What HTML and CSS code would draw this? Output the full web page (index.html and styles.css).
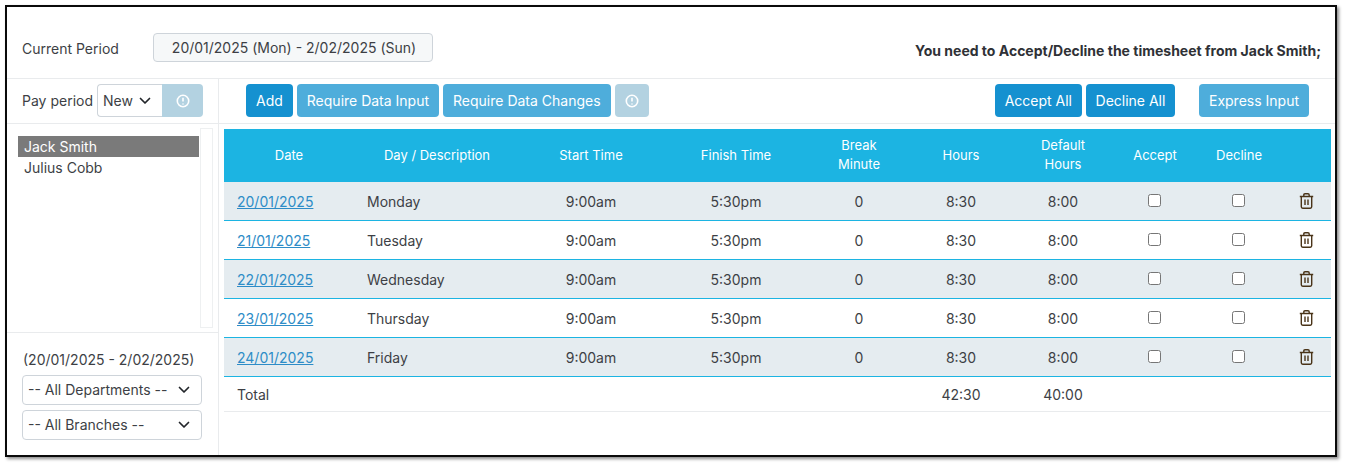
FILE: index.html
```html
<!DOCTYPE html>
<html lang="en">
<head>
<meta charset="utf-8">
<title>Timesheet</title>
<link rel="stylesheet" href="styles.css">
</head>
<body>
<main class="frame">
  <header class="top">
    <span class="label">Current Period</span>
    <div class="period">20/01/2025 (Mon) - 2/02/2025 (Sun)</div>
    <strong class="notice">You need to Accept/Decline the timesheet from Jack Smith;</strong>
  </header>
  <div class="body">
    <aside class="side">
      <div class="payrow">
        <span class="paylabel">Pay period</span>
        <div class="select new">New<svg class="chev" viewBox="0 0 12 8"><path d="M1.5 1.5 6 6l4.500-4.500"/></svg></div>
        <button class="btn pale joined"><svg class="info" viewBox="0 0 14 14"><circle cx="7" cy="7" r="5.7"/><path d="M7 3.800v3.800M7 9.400v1"/></svg></button>
      </div>
      <div class="listwrap">
        <ul class="list">
          <li class="sel">Jack Smith</li>
          <li>Julius Cobb</li>
        </ul>
        <div class="track"></div>
      </div>
      <div class="filters">
        <div class="range">(20/01/2025 - 2/02/2025)</div>
        <div class="select wide">-- All Departments --<svg class="chev" viewBox="0 0 12 8"><path d="M1.5 1.5 6 6l4.500-4.500"/></svg></div>
        <div class="select wide">-- All Branches --<svg class="chev" viewBox="0 0 12 8"><path d="M1.5 1.5 6 6l4.500-4.500"/></svg></div>
      </div>
    </aside>
    <section class="content">
      <div class="toolbar">
        <button class="btn dark">Add</button>
        <button class="btn mid">Require Data Input</button>
        <button class="btn mid">Require Data Changes</button>
        <button class="btn pale square"><svg class="info" viewBox="0 0 14 14"><circle cx="7" cy="7" r="5.7"/><path d="M7 3.800v3.800M7 9.400v1"/></svg></button>
        <span class="spacer"></span>
        <button class="btn dark">Accept All</button>
        <button class="btn dark decline">Decline All</button>
        <button class="btn mid express">Express Input</button>
      </div>
      <div class="tablewrap">
        <table class="grid">
          <colgroup>
            <col class="c1"><col class="c2"><col class="c3"><col class="c4"><col class="c5"><col class="c6"><col class="c7"><col class="c8"><col class="c9"><col class="c10">
          </colgroup>
          <thead>
            <tr>
              <th>Date</th><th class="day">Day / Description</th><th>Start Time</th><th>Finish Time</th><th class="two">Break<br>Minute</th><th>Hours</th><th class="two">Default<br>Hours</th><th>Accept</th><th>Decline</th><th></th>
            </tr>
          </thead>
          <tbody>
            <tr class="odd"><td class="left"><a href="#">20/01/2025</a></td><td class="left">Monday</td><td>9:00am</td><td>5:30pm</td><td>0</td><td>8:30</td><td>8:00</td><td><span class="check"></span></td><td><span class="check"></span></td><td><svg class="trash" viewBox="0 0 15 16"><path d="M.8 3.500h13.400M4.800 3.500V2q0-1.200 1.200-1.200h3q1.200 0 1.200 1.200v1.500M2.300 3.500v10.300q0 1.400 1.400 1.400h7.600q1.400 0 1.400-1.400V3.500M6 6.500v5.500M9 6.500v5.500"/></svg></td></tr>
            <tr><td class="left"><a href="#">21/01/2025</a></td><td class="left">Tuesday</td><td>9:00am</td><td>5:30pm</td><td>0</td><td>8:30</td><td>8:00</td><td><span class="check"></span></td><td><span class="check"></span></td><td><svg class="trash" viewBox="0 0 15 16"><path d="M.8 3.500h13.400M4.800 3.500V2q0-1.200 1.200-1.200h3q1.200 0 1.200 1.200v1.500M2.300 3.500v10.300q0 1.400 1.400 1.400h7.600q1.400 0 1.400-1.400V3.500M6 6.500v5.500M9 6.500v5.500"/></svg></td></tr>
            <tr class="odd"><td class="left"><a href="#">22/01/2025</a></td><td class="left">Wednesday</td><td>9:00am</td><td>5:30pm</td><td>0</td><td>8:30</td><td>8:00</td><td><span class="check"></span></td><td><span class="check"></span></td><td><svg class="trash" viewBox="0 0 15 16"><path d="M.8 3.500h13.400M4.800 3.500V2q0-1.200 1.200-1.200h3q1.200 0 1.200 1.200v1.500M2.300 3.500v10.300q0 1.400 1.400 1.400h7.600q1.400 0 1.400-1.400V3.500M6 6.500v5.500M9 6.500v5.500"/></svg></td></tr>
            <tr><td class="left"><a href="#">23/01/2025</a></td><td class="left">Thursday</td><td>9:00am</td><td>5:30pm</td><td>0</td><td>8:30</td><td>8:00</td><td><span class="check"></span></td><td><span class="check"></span></td><td><svg class="trash" viewBox="0 0 15 16"><path d="M.8 3.500h13.400M4.800 3.500V2q0-1.200 1.200-1.200h3q1.200 0 1.200 1.200v1.500M2.300 3.500v10.300q0 1.400 1.400 1.400h7.600q1.400 0 1.400-1.400V3.500M6 6.500v5.500M9 6.500v5.500"/></svg></td></tr>
            <tr class="odd"><td class="left"><a href="#">24/01/2025</a></td><td class="left">Friday</td><td>9:00am</td><td>5:30pm</td><td>0</td><td>8:30</td><td>8:00</td><td><span class="check"></span></td><td><span class="check"></span></td><td><svg class="trash" viewBox="0 0 15 16"><path d="M.8 3.500h13.400M4.800 3.500V2q0-1.200 1.200-1.200h3q1.200 0 1.200 1.200v1.500M2.300 3.500v10.300q0 1.400 1.400 1.400h7.600q1.400 0 1.400-1.400V3.500M6 6.500v5.500M9 6.500v5.500"/></svg></td></tr>
          </tbody>
          <tfoot>
            <tr><td class="left">Total</td><td></td><td></td><td></td><td></td><td>42:30</td><td>40:00</td><td></td><td></td><td></td></tr>
          </tfoot>
        </table>
      </div>
    </section>
  </div>
</main>
</body>
</html>
```
FILE: styles.css
```css
* { box-sizing: border-box; }
html, body { margin: 0; height: 100%; background: #fff; }
body {
  padding: 5px 9px 0 5px;
  font-family: Inter, "Liberation Sans", sans-serif;
  font-size: 14px;
  color: #3d3f45;
  overflow: hidden;
}
.frame {
  width: 1332px;
  height: 452px;
  border: 2px solid #0a0a0a;
  background: #fff;
  box-shadow: 2px 2px 3px rgba(0, 0, 0, .45);
  display: flex;
  flex-direction: column;
}
.top {
  height: 72px;
  flex: none;
  display: flex;
  align-items: center;
  padding: 10px 14px 0 15px;
  border-bottom: 1px solid #e9ebed;
}
.label { width: 131px; margin-top: 2px; }
.period {
  width: 280px;
  height: 29px;
  border: 1px solid #ced4da;
  border-radius: 4px;
  background: #f6f8f9;
  text-align: center;
  line-height: 27px;
  padding-left: 2px;
}
.notice {
  margin-left: auto;
  margin-top: 6px;
  font-weight: 700;
  color: #2f3136;
}
.body { flex: 1; display: flex; min-height: 0; }
.side {
  width: 212px;
  flex: none;
  border-right: 1px solid #e9ebed;
  display: flex;
  flex-direction: column;
}
.payrow {
  height: 45px;
  flex: none;
  display: flex;
  align-items: center;
  padding-left: 15px;
  padding-bottom: 1px;
  border-bottom: 1px solid #e9ebed;
}
.paylabel { width: 75px; }
.select {
  display: flex;
  align-items: center;
  justify-content: space-between;
  background: #fff;
  border: 1px solid #ced4da;
  border-radius: 4px;
  padding: 0 11px 0 5px;
}
.new {
  width: 65px;
  height: 33px;
  border-radius: 4px 0 0 4px;
  border-right: 0;
}
.chev {
  width: 12px;
  height: 8px;
  fill: none;
  stroke: #22252a;
  stroke-width: 1.7;
  stroke-linecap: round;
  stroke-linejoin: round;
}
.btn {
  height: 33px;
  border: 0;
  border-radius: 4px;
  padding: 0 10px;
  font: inherit;
  color: #fff;
  display: inline-flex;
  align-items: center;
  justify-content: center;
}
.dark { background: #1591d0; }
.mid { background: #4eaddb; }
.pale { background: #b3d2e1; }
.joined { width: 41px; border-radius: 0 4px 4px 0; padding: 0; }
.square { width: 34px; padding: 0; }
.decline { width: 89px; padding: 0; }
.info {
  width: 14px;
  height: 14px;
  fill: none;
  stroke: #fff;
  stroke-width: 1.6;
}
.listwrap {
  flex: 1;
  min-height: 0;
  display: flex;
  padding: 4px 5px 4px 11px;
  border-bottom: 1px solid #e9ebed;
}
.list {
  list-style: none;
  margin: 8px 0 0;
  padding: 0;
  width: 181px;
  flex: none;
  line-height: 21px;
}
.list li { padding-left: 6px; }
.list .sel { background: #7a7a7a; color: #fff; }
.track {
  width: 14px;
  margin-left: 1px;
  border: 1px solid #eef0f1;
}
.filters {
  height: 122px;
  flex: none;
  padding: 18px 16px 0 15px;
}
.range { line-height: 17px; margin-bottom: 7px; padding-left: 1px; }
.wide {
  width: 180px;
  height: 30px;
  margin-bottom: 5px;
  padding-bottom: 1px;
}
.content { flex: 1; min-width: 0; display: flex; flex-direction: column; }
.toolbar {
  height: 45px;
  flex: none;
  display: flex;
  align-items: center;
  gap: 4px;
  padding: 0 26px 1px 27px;
  border-bottom: 1px solid #e9ebed;
}
.spacer { flex: 1; }
.express { margin-left: 20px; }
.tablewrap { padding: 5px 5px 0 5px; }
.grid {
  width: 1107px;
  table-layout: fixed;
  border-collapse: separate;
  border-spacing: 0;
}
.c1 { width: 130px; }
.c2 { width: 164px; }
.c3 { width: 146px; }
.c4 { width: 144px; }
.c5 { width: 102px; }
.c6 { width: 102px; }
.c7 { width: 102px; }
.c8 { width: 82px; }
.c9 { width: 86px; }
.c10 { width: 49px; }
th {
  height: 53px;
  padding: 0;
  background: #1cb4e2;
  color: #fff;
  font-weight: 400;
  font-size: 13px;
  line-height: 19px;
  text-align: center;
}
th.day { padding-left: 2px; }
th.two { padding-bottom: 2px; }
tbody td {
  height: 39px;
  padding: 1px 0 0;
  text-align: center;
  border-bottom: 1px solid #1cb4e2;
}
tbody .odd td { background: #e5ecf0; }
tbody td.left, tfoot td.left { text-align: left; padding-left: 13px; }
tfoot td {
  height: 35px;
  padding: 1px 0 0;
  text-align: center;
  border-bottom: 1px solid #e9ebed;
}
a { color: #2d8cc7; }
.check {
  display: inline-block;
  width: 13px;
  height: 13px;
  margin-right: 1px;
  vertical-align: 0;
  border: 1px solid #767676;
  border-radius: 2.5px;
  background: #fff;
}
.trash {
  width: 15px;
  height: 16px;
  margin-right: 1px;
  vertical-align: -1px;
  fill: none;
  stroke: #4a3418;
  stroke-width: 1.4;
}
```
